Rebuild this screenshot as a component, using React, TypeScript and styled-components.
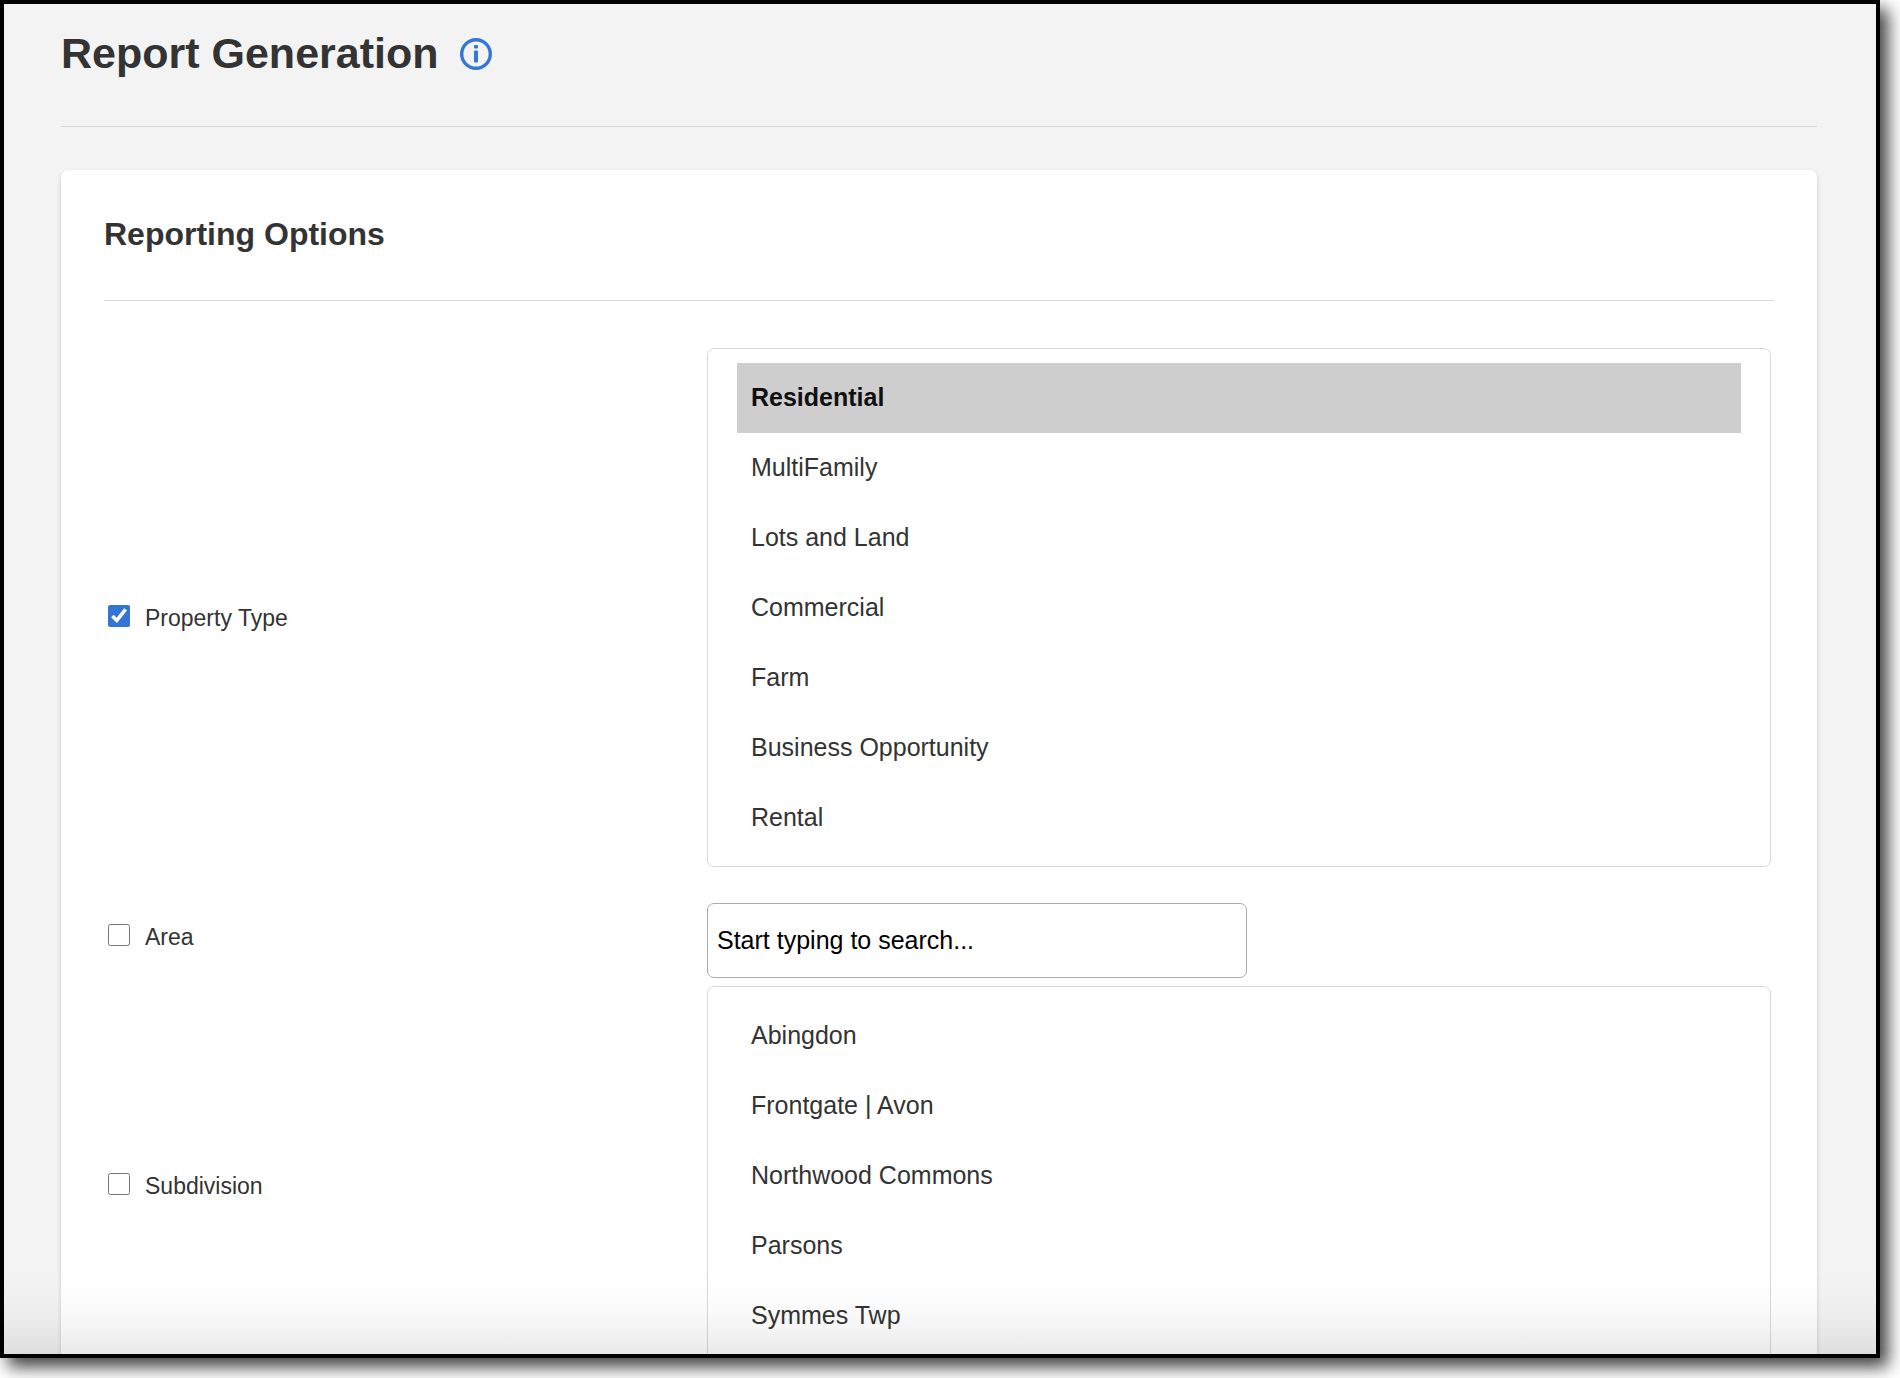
import React, { useId, useState } from "react";
import styled, { createGlobalStyle } from "styled-components";

const GlobalStyle = createGlobalStyle`
  *, *::before, *::after { box-sizing: border-box; }
  body {
    margin: 0;
    background: #ffffff;
    color: #333333;
    font-family: "Liberation Sans", Arial, Helvetica, sans-serif;
  }
`;

const Stage = styled.div`
  height: 100vh;
  padding: 0 20px 20px 0;
  overflow: hidden;
`;

const Frame = styled.div`
  position: relative;
  height: 100%;
  border: 4px solid #000000;
  background: #f3f3f3;
  box-shadow: 8px 9px 16px rgba(0, 0, 0, 0.75);
  overflow: hidden;

  &::after {
    content: "";
    position: absolute;
    left: 0;
    right: 0;
    bottom: 0;
    height: 84px;
    pointer-events: none;
    background: linear-gradient(
      to bottom,
      rgba(0, 0, 0, 0) 0%,
      rgba(0, 0, 0, 0.01) 35%,
      rgba(0, 0, 0, 0.035) 65%,
      rgba(0, 0, 0, 0.085) 100%
    );
  }
`;

const Page = styled.main`
  height: 100%;
  overflow-y: auto;
  scrollbar-width: none;
  padding: 0 59px 60px 57px;
`;

const PageHeader = styled.header`
  display: flex;
  align-items: center;
  gap: 21px;
  height: 123px;
  padding-bottom: 24px;
  border-bottom: 1px solid #d9d9d9;
`;

const PageTitle = styled.h1`
  margin: 0;
  font-size: 43px;
  line-height: 52px;
  font-weight: 700;
`;

const InfoButton = styled.button`
  display: flex;
  padding: 1px 0 0;
  border: 0;
  background: none;
  color: #3377d8;
  cursor: pointer;
`;

const Card = styled.section`
  margin-top: 43px;
  padding: 0 43px 40px;
  border-radius: 7px;
  background: #ffffff;
  box-shadow: 0 2px 4px rgba(0, 0, 0, 0.18);
`;

const CardTitle = styled.h2`
  margin: 0 0 47px;
  padding: 45px 0 46px;
  border-bottom: 1px solid #d9d9d9;
  font-size: 32px;
  line-height: 39px;
  font-weight: 700;
`;

const OptionRow = styled.div`
  display: grid;
  grid-template-columns: 600px minmax(0, 1fr);
  align-items: center;
  padding: 0 3px;

  @media (max-width: 1200px) {
    grid-template-columns: 36% minmax(0, 1fr);
  }
`;

const OptionLabel = styled.label`
  display: flex;
  align-items: center;
  gap: 15px;
  padding-left: 1px;
  font-size: 23px;
  line-height: 28px;
`;

const Tick = styled.input`
  flex: none;
  width: 22px;
  height: 22px;
  margin: 0 0 3px;
  accent-color: #3374d6;
`;

const ListBox = styled.select`
  display: block;
  width: 100%;
  margin: 0 0 20px;
  padding: 14px 29px 13px;
  border: 1px solid #d9d9d9;
  border-radius: 7px;
  background: #ffffff;
  color: #333333;
  font: 25px "Liberation Sans", Arial, Helvetica, sans-serif;
  outline: none;
  scrollbar-width: none;

  option {
    padding: 20px 14px 21px;
  }

  option:checked {
    background: #cecece linear-gradient(#cecece, #cecece);
    color: #101010;
    font-weight: 700;
  }
`;

const SearchBox = styled.input`
  display: block;
  width: 540px;
  max-width: 100%;
  height: 75px;
  margin: 16px 0 8px;
  padding: 0 9px;
  border: 1px solid #aaaaaa;
  border-radius: 7px;
  background: #ffffff;
  font: 25px "Liberation Sans", Arial, Helvetica, sans-serif;

  &::placeholder {
    color: #000000;
    opacity: 1;
  }
`;

const PROPERTY_TYPES = [
  "Residential",
  "MultiFamily",
  "Lots and Land",
  "Commercial",
  "Farm",
  "Business Opportunity",
  "Rental",
];

const SUBDIVISIONS = ["Abingdon", "Frontgate | Avon", "Northwood Commons", "Parsons", "Symmes Twp"];

function InfoIcon() {
  return (
    <svg width="32" height="32" viewBox="0 0 32 32" fill="none" aria-hidden="true">
      <circle cx="16" cy="16" r="14.3" stroke="currentColor" strokeWidth="3.4" />
      <rect x="14" y="7" width="4" height="3.6" rx="1" fill="currentColor" />
      <rect x="14" y="12.6" width="4" height="12" rx="1" fill="currentColor" />
    </svg>
  );
}

type OptionProps = {
  label: string;
  defaultChecked?: boolean;
  children: React.ReactNode;
};

function Option({ label, defaultChecked = false, children }: OptionProps) {
  const id = useId();
  return (
    <OptionRow>
      <OptionLabel htmlFor={id}>
        <Tick id={id} type="checkbox" defaultChecked={defaultChecked} />
        {label}
      </OptionLabel>
      {children}
    </OptionRow>
  );
}

type ChoiceListProps = { label: string; items: string[]; initial?: string[] };

function ChoiceList({ label, items, initial = [] }: ChoiceListProps) {
  const [selected, setSelected] = useState<string[]>(initial);
  return (
    <ListBox
      multiple
      size={items.length}
      aria-label={label}
      value={selected}
      onChange={(event) => setSelected(Array.from(event.target.selectedOptions, (o) => o.value))}
    >
      {items.map((item) => (
        <option key={item} value={item}>
          {item}
        </option>
      ))}
    </ListBox>
  );
}

export default function App() {
  return (
    <>
      <GlobalStyle />
      <Stage>
        <Frame>
          <Page>
            <PageHeader>
              <PageTitle>Report Generation</PageTitle>
              <InfoButton type="button" aria-label="About report generation">
                <InfoIcon />
              </InfoButton>
            </PageHeader>
            <Card>
              <CardTitle>Reporting Options</CardTitle>
              <Option label="Property Type" defaultChecked>
                <ChoiceList label="Property types" items={PROPERTY_TYPES} initial={["Residential"]} />
              </Option>
              <Option label="Area">
                <SearchBox type="text" aria-label="Search areas" placeholder="Start typing to search..." />
              </Option>
              <Option label="Subdivision">
                <ChoiceList label="Subdivisions" items={SUBDIVISIONS} />
              </Option>
            </Card>
          </Page>
        </Frame>
      </Stage>
    </>
  );
}
